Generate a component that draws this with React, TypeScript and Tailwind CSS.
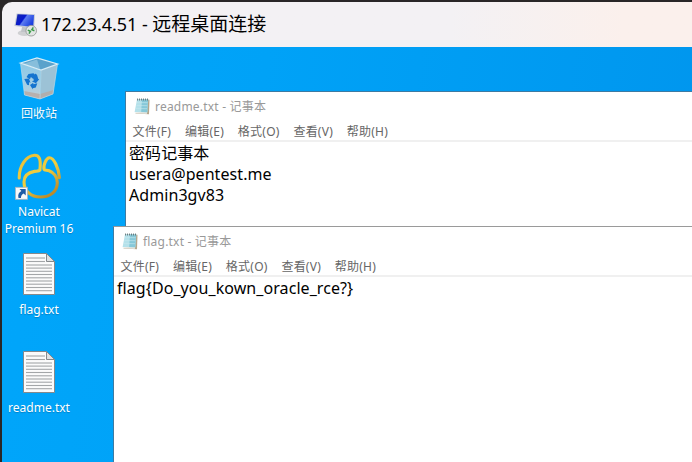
import type { ReactNode } from "react";

const MENU = ["文件(F)", "编辑(E)", "格式(O)", "查看(V)", "帮助(H)"];

function RemoteIcon() {
  return (
    <svg className="h-6 w-6 shrink-0" viewBox="0 0 24 24">
      <defs>
        <linearGradient id="screen" x1="0" y1="0" x2="1" y2="0.5">
          <stop offset="0" stopColor="#1828a8" />
          <stop offset="0.48" stopColor="#0718d0" />
          <stop offset="0.55" stopColor="#5d7cf0" />
          <stop offset="1" stopColor="#1b3fe0" />
        </linearGradient>
      </defs>
      <ellipse cx="10.5" cy="20" rx="6.8" ry="3" fill="#cfd0d2" />
      <path d="M8 14h6l1 5H7z" fill="#c0c3c7" />
      <path d="M2.6 0.4 21 1.2 20.2 15.4 0.4 13z" fill="#c3cad6" />
      <path d="M3.5 1.3 20 2 19.2 14 1.7 12z" fill="url(#screen)" />
      <circle cx="17.2" cy="17.7" r="5.3" fill="#e3e6e4" stroke="#9a9c9b" strokeWidth="0.9" />
      <path d="m13.8 17.1 2.6 1.2-1.4 2.4M20.4 17.7l-2.5-1 1.4-2.4" fill="none" stroke="#3c9a4a" strokeWidth="1.5" />
    </svg>
  );
}

function RecycleBin() {
  return (
    <svg className="h-12 w-12" viewBox="0 0 48 48">
      <defs>
        <linearGradient id="bin" x1="0" y1="0" x2="0" y2="1">
          <stop offset="0" stopColor="#8cc8e6" />
          <stop offset="0.65" stopColor="#a6cfe4" />
          <stop offset="1" stopColor="#c8cbce" />
        </linearGradient>
      </defs>
      <path d="M5.5 9 26 16 25 45 9.5 41z" fill="url(#bin)" />
      <path d="M26 16 42.5 10 38 40 25 45z" fill="#9cc2d6" />
      <path d="M9 37 25 40 38.5 36 38 40 25 45 9.5 41z" fill="#b5a9a4" opacity="0.8" />
      <path d="M5.5 9 22 4 42.5 10 26 16z" fill="#5ba2cb" />
      <path d="M8 10 22 5.5 25 15z" fill="#87bedb" />
      <path d="M5.5 9 22 4 42.5 10 26 16z" fill="none" stroke="#d9edf6" strokeWidth="1.3" />
      <path d="M5.5 9 9.5 41 25 45 38 40 42.5 10M26 16 25 45" fill="none" stroke="#bcdae6" strokeWidth="0.7" />
      <g fill="#1474cf">
        <path d="m11.5 23 2-3 5-.8 2 2.2-2.2 3.6-2.4-2-1 2.2z" />
        <path d="m20 19.6 2 1.2 1.3 4.2.9.2-3.3 4-4-2 2-.8-.8-2.6z" />
        <path d="m9.3 25 4.6-.4 1.6 4.1-1.5-.5.1 3-2-.5z" />
        <path d="m15 31 3.3-2.3v1.5l4-1-1.5 4.2-3 .9v1.2z" />
      </g>
    </svg>
  );
}

function Shortcut() {
  return (
    <g>
      <rect x="0.5" y="35.3" width="12" height="12" fill="#f7f8fa" stroke="#a9b3bd" strokeWidth="0.8" />
      <path d="M4.5 37h6.2v6.4l-2-2c-1.8 1-2.8 2.4-2.8 4.7H3.5c-.9-3.2.3-5.5 2.9-7z" fill="#1e5ba6" />
    </g>
  );
}

function NavicatIcon() {
  return (
    <svg className="h-12 w-12" viewBox="0 0 48 48">
      <defs>
        <linearGradient id="gold" x1="0" y1="0" x2="0.7" y2="1">
          <stop offset="0" stopColor="#e5bd38" />
          <stop offset="0.55" stopColor="#f0cf40" />
          <stop offset="1" stopColor="#bd8a28" />
        </linearGradient>
      </defs>
      <path
        d="M4.2 26C4 14 11 3.8 19.5 3.3c5-.2 6.6 4.2 5.4 14.7-1 1.4-3 1-5.4 1.4C13 20.6 9 24.3 9 30c0 9 7 15 16.5 15 10 0 16.8-5.5 16.8-14.5 0-5.5-3.6-10-8.2-11.8-2-.8-4.6-.2-5-1.2C28 14 31 5.7 34.4 5.7c4.4 0 9.4 10 10 20"
        fill="none"
        stroke="url(#gold)"
        strokeWidth="3.1"
        strokeLinecap="round"
        strokeLinejoin="round"
      />
      <Shortcut />
    </svg>
  );
}

function TextFile() {
  const lines = [5, 8.5, 12, 15.1, 18.3, 21.5, 24.8, 28, 31.2, 34.5, 37.7];
  return (
    <svg className="h-12 w-12" viewBox="0 0 48 48">
      <path d="M8.5 3.5h23l8 8v33h-31z" fill="#fbfbfb" stroke="#85898c" />
      {lines.map((y, i) => (
        <path key={y} d={`M11 ${y + 3}h${i < 2 ? 19 : 26}`} stroke="#a3a6a8" strokeWidth="1.1" />
      ))}
      <path d="M31.5 3.5v8h8z" fill="#dfe2e4" stroke="#85898c" />
    </svg>
  );
}

function NotepadIcon() {
  return (
    <svg className="h-[18px] w-4 shrink-0" viewBox="0 0 16 18">
      <path d="m4 1.5 11.5.3-.5 14.4L1.5 15.5z" fill="#b5a68c" />
      <path d="m3 1.3 11.3.2-1 13L0.6 14z" fill="#b5e1ea" />
      <path d="M8 1.5h6.2l-1 13-6-.2z" fill="#86c8d8" />
      <path d="m.6 13.9 12.5.6-.3 1.2-11.7-.4z" fill="#f0f4f3" />
      <path d="m3 4.5 10.7.2M2.5 7.5l10.8.2M2 10.5l11 .2" stroke="#c8e8ee" strokeWidth="0.6" />
      <path d="M3.5.5v2M5.5.5v2M7.5.5v2M9.5.5v2M11.5.5v2M13.5.5v2" stroke="#56676c" strokeWidth="0.8" />
    </svg>
  );
}

function DesktopItem({ icon, children }: { icon: ReactNode; children: ReactNode }) {
  return (
    <div className="flex h-[98px] w-[74px] flex-col items-center text-center text-[12px] leading-[17px] whitespace-nowrap text-white">
      {icon}
      <div className="mt-[3px] [text-shadow:0_1px_1px_#0080c4]">{children}</div>
    </div>
  );
}

function Notepad({ title, place, children }: { title: ReactNode; place: string; children: ReactNode }) {
  return (
    <section className={`absolute right-0 bottom-0 border-t border-l bg-white ${place}`}>
      <header className="flex h-[29px] items-center pl-2 text-[12px] tracking-[0.2px] text-[#999]">
        <NotepadIcon />
        <span className="ml-[5px] whitespace-nowrap">{title}</span>
      </header>
      <nav className="flex h-[21px] items-center gap-[13.8px] border-b-2 border-[#f0f0f0] pt-[3px] pl-[6.5px] text-[12px] tracking-[0.24px] whitespace-nowrap text-[#666]">
        {MENU.map((label) => (
          <span key={label}>{label}</span>
        ))}
      </nav>
      <div className="pt-px pl-[3px] text-[16px] leading-[21px] tracking-[0.07px] whitespace-nowrap text-black">{children}</div>
    </section>
  );
}

export default function App() {
  return (
    <div className="h-[462px] w-[692px] overflow-hidden bg-[#292627] font-['Noto_Sans','Noto_Sans_CJK_SC',sans-serif]">
      <div className="ml-0.5 flex h-full flex-col pt-0.5">
        <header className="flex h-[45px] shrink-0 items-center rounded-tl-[10px] bg-linear-to-r from-[#f3f1f4] from-65% to-[#fbf0ec] to-90% pl-3 text-[18px] text-black">
          <RemoteIcon />
          <h1 className="ml-[3px] whitespace-nowrap">
            <span className="tracking-[-0.05px]">172.23.4.51 - </span>
            <span className="text-[19px]">远程桌面连接</span>
          </h1>
        </header>
        <main className="relative flex-1 bg-[linear-gradient(100deg,#00a6fb_0%,#00a2f7_35%,#0095ed_100%)]">
          <div className="flex flex-col pt-[7px]">
            <DesktopItem icon={<RecycleBin />}>回收站</DesktopItem>
            <DesktopItem icon={<NavicatIcon />}>Navicat<br />Premium 16</DesktopItem>
            <DesktopItem icon={<TextFile />}>flag.txt</DesktopItem>
            <DesktopItem icon={<TextFile />}>readme.txt</DesktopItem>
          </div>
          <Notepad title="readme.txt - 记事本" place="top-[44px] left-[123px] border-[#3d7ba3]">
            <p>密码记事本</p>
            <p>usera@pentest.me</p>
            <p>Admin3gv83</p>
          </Notepad>
          <Notepad title="flag.txt - 记事本" place="top-[179px] left-[111px] border-t-[#9a9a9a] border-l-[#3d7ba3]">
            <p>flag&#123;Do_you_kown_oracle_rce?&#125;</p>
          </Notepad>
        </main>
      </div>
    </div>
  );
}
